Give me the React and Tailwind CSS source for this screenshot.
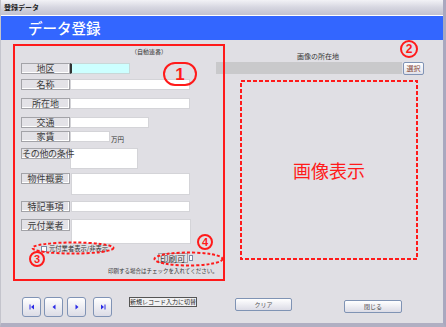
import React from "react";

const Label = ({ children, className = "" }) => (
  <div
    className={
      "w-[49px] h-[11px] shrink-0 border border-[#a3a3a8] bg-[#e3e2e7] shadow-[inset_-1px_-1px_0_#ffffff] flex items-center justify-center text-[9px] leading-none text-[#3a3a3a] whitespace-nowrap " +
      className
    }
  >
    {children}
  </div>
);

const Field = ({ className = "" }) => (
  <div className={"h-[11px] bg-white border border-[#d4d4d8] " + className} />
);

function NavIcon({ kind }) {
  return (
    <svg width="8" height="8" viewBox="0 0 8 8">
      {kind === "first" && (
        <>
          <rect x="1.5" y="1.5" width="1" height="5" fill="#2a2ae6" />
          <polygon points="6,1.5 6,6.5 3,4" fill="#2a2ae6" />
        </>
      )}
      {kind === "prev" && <polygon points="5.5,1.5 5.5,6.5 2.5,4" fill="#2a2ae6" />}
      {kind === "next" && <polygon points="2.5,1.5 2.5,6.5 5.5,4" fill="#2a2ae6" />}
      {kind === "last" && (
        <>
          <polygon points="2,1.5 2,6.5 5,4" fill="#2a2ae6" />
          <rect x="5.5" y="1.5" width="1" height="5" fill="#2a2ae6" />
        </>
      )}
    </svg>
  );
}

const NavBtn = ({ kind, className = "" }) => (
  <button
    className={
      "w-[19px] h-[20px] rounded-[3px] border border-[#8093b5] bg-linear-to-b from-white to-[#dcdce6] flex items-center justify-center " +
      className
    }
  >
    <NavIcon kind={kind} />
  </button>
);

const Circle = ({ n, className = "" }) => (
  <div
    className={
      "absolute rounded-full border-2 border-[#ff1a1a] flex items-center justify-center text-[#ff1a1a] font-bold leading-none font-['Liberation_Sans',sans-serif] " +
      className
    }
  >
    {n}
  </div>
);

export default function App() {
  return (
    <div className="relative w-[446px] h-[327px] overflow-hidden bg-[#e0dfe4] border-l border-[#c4c4cc] border-r-[3px] border-r-[#a9a8bf] border-b-[4px] border-b-[#b0afc2] font-['Noto_Sans_CJK_JP',sans-serif] flex flex-col">
      {/* title bar */}
      <div className="h-[16px] shrink-0 bg-linear-to-b from-[#f2f2f6] via-[#d6d6e0] to-[#c2c2d0] border-b border-white flex items-center pl-[3px]">
        <span className="text-[7px] font-bold leading-none text-[#222]">登録データ</span>
      </div>

      {/* header */}
      <div className="h-[24px] shrink-0 bg-[#3366ff] flex items-center pl-[27px]">
        <span className="text-[14.5px] font-medium leading-none text-white">データ登録</span>
      </div>

      {/* body */}
      <div className="flex-1 flex flex-col">
        <div className="h-[257px] flex">
          {/* left column */}
          <div className="ml-[20px] w-[172px] flex flex-col">
            <div className="mt-[7px] h-[9px] ml-[110px] flex items-center text-[6px] leading-none text-[#333]">
              （自動連番）
            </div>

            <div className="mt-[7px] flex">
              <Label>地区</Label>
              <div className="h-[11px] w-[60px] bg-[#ccffff] border border-[#c8d8d8] border-l-2 border-l-[#333]" />
            </div>
            <div className="mt-[5px] flex">
              <Label>名称</Label>
              <Field className="w-[120px]" />
            </div>
            <div className="mt-[8px] flex">
              <Label>所在地</Label>
              <Field className="w-[120px]" />
            </div>
            <div className="mt-[8px] flex">
              <Label>交通</Label>
              <Field className="w-[79px]" />
            </div>
            <div className="mt-[3px] flex items-end">
              <Label>家賃</Label>
              <Field className="w-[40px]" />
              <span className="ml-[1px] text-[6.5px] leading-none text-[#333]">万円</span>
            </div>
            <div className="mt-[6px] flex items-start">
              <Label className="relative z-10 justify-start text-[8px] tracking-[-0.3px]">その他の条件</Label>
              <div className="w-[68px] h-[21px] bg-white border border-[#d4d4d8]" />
            </div>
            <div className="mt-[4px] flex items-start">
              <Label>物件概要</Label>
              <div className="ml-[1px] w-[119px] h-[22px] bg-white border border-[#d4d4d8]" />
            </div>
            <div className="mt-[6px] flex">
              <Label>特記事項</Label>
              <Field className="ml-[1px] w-[119px]" />
            </div>
            <div className="mt-[7px] flex items-start">
              <Label className="h-[12px]">元付業者</Label>
              <div className="ml-[1px] w-[120px] h-[25px] bg-white border border-[#d4d4d8]" />
            </div>
            <div className="mt-[1px] h-[8px] ml-[20px] flex items-center gap-[2px]">
              <div className="w-[6px] h-[6px] bg-white border border-[#7a8aa8]" />
              <span className="text-[6.3px] leading-none text-[#333] whitespace-nowrap">元付業者表示/非表示</span>
            </div>
            <div className="h-[10px] ml-[137px] flex items-start">
              <div className="w-[49px] h-[10px] border border-[#a3a3a8] bg-[#e3e2e7] flex items-center justify-center text-[8.5px] leading-none text-[#3a3a3a]">
                印刷可
              </div>
              <div className="ml-[1px] mt-[2px] w-[6px] h-[6px] bg-white border border-[#7a8aa8]" />
            </div>
            <div className="mt-[5px] ml-[87px] h-[8px] flex items-center text-[5.5px] leading-none text-[#333] whitespace-nowrap">
              印刷する場合はチェックを入れてください。
            </div>
          </div>

          {/* right column */}
          <div className="ml-[23px] flex flex-col">
            <div className="mt-[12px] ml-[81px] h-[8px] flex items-center text-[7px] leading-none text-[#333]">
              画像の所在地
            </div>
            <div className="mt-[2px] flex">
              <div className="w-[186px] h-[12px] bg-[#c9c9cb] bg-[radial-gradient(#bdbdc0_0.5px,transparent_0.6px)] bg-[length:2px_2px]" />
              <button className="ml-[1px] w-[21px] h-[13px] rounded-[2px] border border-[#8093b5] bg-linear-to-b from-white to-[#e2e2ea] flex items-center justify-center text-[7px] leading-none text-[#8a4a3a]">
                選択
              </button>
            </div>
            <div className="relative mt-[5px] ml-[24px] w-[178px] h-[180px] flex items-center justify-center">
              <svg className="absolute inset-0" width="178" height="180">
                <rect x="1" y="1" width="176" height="178" fill="none" stroke="#ff1a1a" strokeWidth="2" strokeDasharray="4 2" />
              </svg>
              <span className="text-[18px] leading-none text-[#ff1a1a]">画像表示</span>
            </div>
          </div>
        </div>

        {/* bottom buttons */}
        <div className="flex items-start">
          <NavBtn kind="first" className="ml-[21px]" />
          <NavBtn kind="prev" className="ml-[3px]" />
          <NavBtn kind="next" className="ml-[4px]" />
          <NavBtn kind="last" className="ml-[7px]" />
          <button className="ml-[17px] w-[68px] h-[10px] border border-[#555] bg-[#f2f2f4] flex items-center justify-center text-[6px] leading-none text-[#222] whitespace-nowrap">
            新規レコード入力に切替
          </button>
          <button className="ml-[38px] mt-[1px] w-[57px] h-[13px] rounded-[2px] border border-[#7f93b4] bg-linear-to-b from-white to-[#dcdce6] flex items-center justify-center text-[6px] leading-none text-[#555]">
            クリア
          </button>
          <button className="ml-[52px] mt-[3px] w-[58px] h-[13px] rounded-[2px] border border-[#7f93b4] bg-linear-to-b from-white to-[#dcdce6] flex items-center justify-center text-[6px] leading-none text-[#444]">
            閉じる
          </button>
        </div>
      </div>

      {/* annotations */}
      <div className="absolute left-[12px] top-[44px] w-[212px] h-[237px] border-2 border-[#ff1a1a] pointer-events-none" />
      <Circle n="1" className="left-[162px] top-[62px] w-[34px] h-[24px] text-[17px]" />
      <Circle n="2" className="left-[399px] top-[40px] w-[18px] h-[18px] text-[12px]" />
      <Circle n="3" className="left-[28px] top-[251px] w-[16px] h-[16px] text-[11px]" />
      <Circle n="4" className="left-[196px] top-[234px] w-[16px] h-[16px] text-[11px]" />
      <svg className="absolute left-[30px] top-[241px] pointer-events-none" width="84" height="14">
        <ellipse cx="42" cy="7" rx="40.5" ry="5.5" fill="none" stroke="#ff1a1a" strokeWidth="2" strokeDasharray="3 2" />
      </svg>
      <svg className="absolute left-[152px] top-[251px] pointer-events-none" width="71" height="16">
        <ellipse cx="35.5" cy="8" rx="34" ry="6.5" fill="none" stroke="#ff1a1a" strokeWidth="2" strokeDasharray="3 2" />
      </svg>
    </div>
  );
}
